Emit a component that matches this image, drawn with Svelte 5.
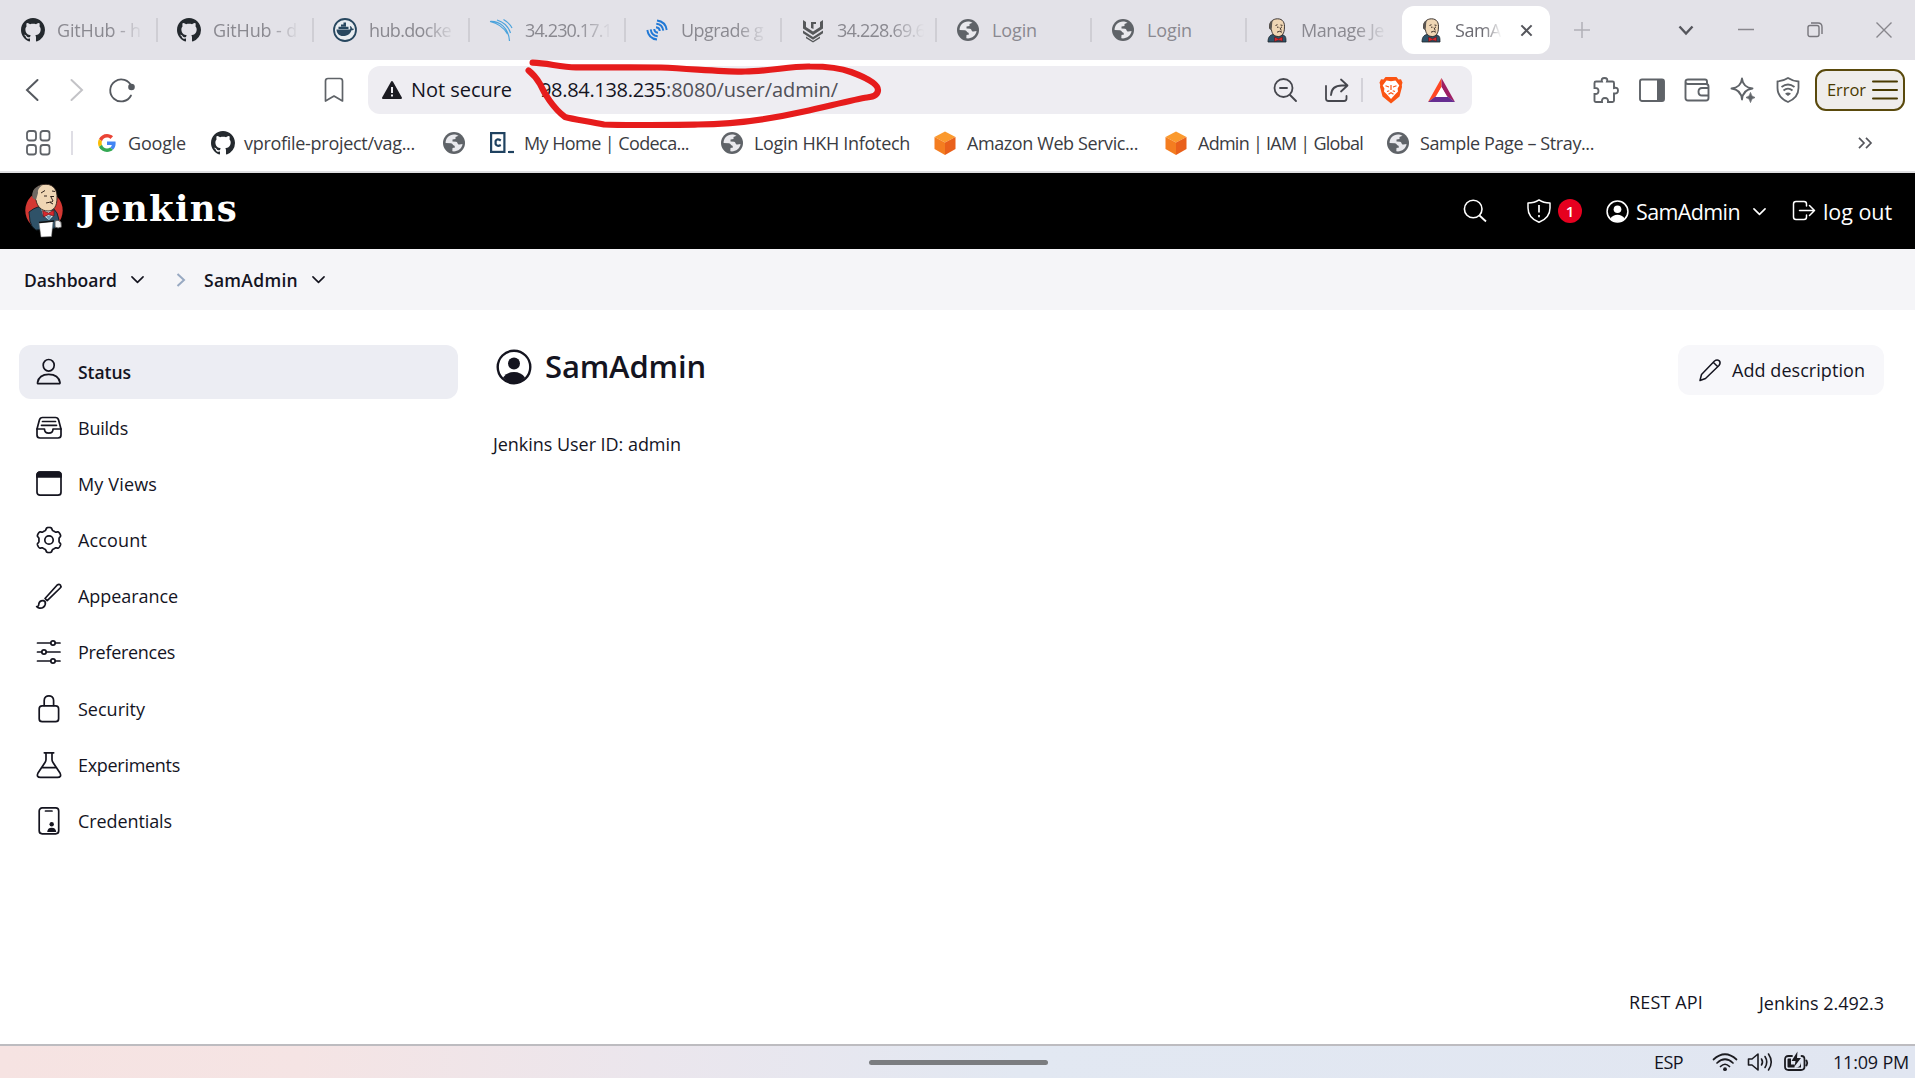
<script>
  // Tracks a label so that it occupies the given width.
  function fit(node, width) {
    const natural = node.getBoundingClientRect().width;
    node.style.letterSpacing = `${(width - 1 - natural) / node.textContent.length}px`;
  }

  // Six-lobed cog outline around (14, 14).
  function cog() {
    let d = '';
    for (let i = 0; i < 180; i++) {
      const a = (i / 180) * Math.PI * 2;
      const r = 11.3 + 1.25 * Math.tanh(-2.4 * Math.cos(6 * a));
      d += `${i ? 'L' : 'M'}${(14 + r * Math.cos(a)).toFixed(2)} ${(14 + r * Math.sin(a)).toFixed(2)}`;
    }
    return d + 'Z';
  }

  const butlerHead = `
    <path d="M3 24C3 19 5 17 8 16.500L18 17C21 18 21 20 21 24Z" fill="#2f5268" stroke="#1d2329" stroke-width=".8"/>
    <path d="M4.500 10C4 4 8 .8 12.500 .8C18 .8 20 5 19.400 10C19.500 15 17 18.500 13.500 18.500C9 18.500 7 15.500 6.500 12Z" fill="#efd6b4" stroke="#2b2522" stroke-width=".9"/>
    <path d="M4.500 11C3.600 6 5 3 8 2.200C6.500 5 7.500 8 6.500 12Z" fill="#5b5652"/>
    <path d="M10.500 7.500l2-.8M15.500 7l2 .4M12 9.200h1.500M16 9.200h1M15 9.500l1.200 3M12 14.200q2.500-1.800 5 0" fill="none" stroke="#3a2c25" stroke-width="1"/>
    <path d="M9.500 19l4 1.800 4-2v4.500l-4-1.300-4 1.600z" fill="#d8282d" stroke="#4a1617" stroke-width=".5"/>`;

  const github = '<path fill="#24292e" d="M8 0C3.580 0 0 3.580 0 8c0 3.540 2.290 6.530 5.470 7.590.4.070.55-.17.55-.38 0-.19-.01-.82-.01-1.490-2.010.37-2.530-.49-2.690-.94-.09-.23-.48-.94-.82-1.130-.28-.15-.68-.52-.01-.53.63-.01 1.080.58 1.230.82.72 1.210 1.870.87 2.330.66.070-.52.28-.87.51-1.070-1.780-.2-3.640-.89-3.640-3.950 0-.87.31-1.590.82-2.150-.08-.2-.36-1.020.08-2.120 0 0 .67-.21 2.200.82.64-.18 1.320-.27 2-.27s1.360.09 2 .27c1.530-1.040 2.200-.82 2.200-.82.44 1.100.16 1.920.08 2.120.51.56.82 1.270.82 2.150 0 3.070-1.870 3.750-3.650 3.950.29.25.54.73.54 1.480 0 1.070-.01 1.930-.01 2.200 0 .21.15.46.55.38A8.010 8.010 0 0 0 16 8c0-4.420-3.580-8-8-8z"/>';
  const globe = '<circle cx="12" cy="12" r="11" fill="#5f6368"/><path d="M12 3.500C7 3.500 3.500 7.500 3.600 12L9 12.200C11 12.500 10.500 14.500 12.500 14.700L13 16.500L10.500 17L10.300 20.300C15 21.200 20.300 17.500 20.500 13L17.500 13.500C15 13.500 16 11 14 10.700L10.500 10.500V8.500L13.500 8V6L16.500 4.700C15 3.800 13.500 3.500 12 3.500Z" fill="#e9e9ed"/>';
  const cube = '<path d="M12 .5l10.500 5.500L12 11.500 1.500 6z" fill="#fb9a2e"/><path d="M1.500 6L12 11.500V24L1.500 18z" fill="#f47d20"/><path d="M22.500 6L12 11.500V24l10.500-6z" fill="#e9601b"/>';

  const glyphs = {
    github: ['0 0 16 16', github],
    globe: ['0 0 24 24', globe],
    cube: ['0 0 24 24', cube],
    butler: ['0 0 24 24', butlerHead],
    docker: ['0 0 24 24', '<circle cx="12" cy="12" r="11" fill="#e8edf1" stroke="#27475f" stroke-width="1.800"/><path d="M3.500 11.500H17C17.500 10.500 17.300 9.500 16.800 8.800L17.600 8C18.700 8.800 19 9.800 19 10.500C20 10.300 20.800 10.600 21 11C20.600 12 19.500 12.400 18.500 12.300C17 16.500 14 18 10 18C6 18 3.800 15.500 3.500 11.500Z" fill="#27475f"/><path d="M5.500 8.800h10v2.200h-10zM8 6.500h5v2H8zM10.500 4.500H13v2h-2.500z" fill="#27475f"/>'],
    arcs: ['0 0 24 24', '<path d="M1 3.500C11 3 19.500 10 20.500 23M8 2C14.500 4 19.500 9 21.500 15M14.500 1.500C18 3.500 21 6 23 10M1 3.500C8 5 15 10 18.500 16" fill="none" stroke="#4ba3dc" stroke-width="1.200"/>'],
    signal: ['0 0 24 24', '<g fill="none" stroke="#2179d6" stroke-width="1.900"><path d="M11 9.200Q14.500 9.500 14.800 13M11.300 5.800Q17.500 6.500 18.300 12.700M12 2.500Q20.500 3.500 21.700 12"/><path d="M13 14.800Q9.500 14.500 9.200 11M12.700 18.200Q6.500 17.500 5.700 11.300M12 21.500Q3.500 20.500 2.300 12"/></g>'],
    chevrons: ['0 0 24 24', '<path d="M2 2l3 2v5l7 4.500L19 9V4l3-2v8.500L12 17 2 10.500zM10 4h5v2h-2.500v5l-2.500-1zM2 12.500L12 19l10-6.500v2.700L12 21.700 2 15.200zM5 18.500l7 4.500 7-4.500v1.700L12 24.500 5 20.200z" fill="#56585a"/>'],
    google: ['0 0 48 48', '<path fill="#ea4335" d="M24 9.500c3.540 0 6.710 1.220 9.210 3.600l6.850-6.850C35.900 2.380 30.470 0 24 0 14.620 0 6.510 5.380 2.560 13.220l7.980 6.190C12.430 13.720 17.740 9.500 24 9.500z"/><path fill="#4285f4" d="M46.980 24.550c0-1.570-.15-3.090-.38-4.550H24v9.020h12.940c-.58 2.960-2.260 5.480-4.780 7.180l7.730 6c4.510-4.180 7.090-10.360 7.090-17.650z"/><path fill="#fbbc05" d="M10.530 28.590A14.500 14.500 0 0 1 9.770 24c0-1.600.27-3.140.76-4.590l-7.980-6.190A23.900 23.900 0 0 0 0 24c0 3.880.92 7.540 2.560 10.780z"/><path fill="#34a853" d="M24 48c6.480 0 11.930-2.130 15.890-5.810l-7.730-6c-2.150 1.450-4.920 2.300-8.160 2.300-6.260 0-11.570-4.220-13.470-9.910l-7.980 6.190C6.510 42.620 14.620 48 24 48z"/>'],
    code: ['0 0 24 24', '<rect x="1.100" y="2.100" width="13.300" height="18.800" fill="#fff" stroke="#1f4260" stroke-width="2.200"/><path d="M10.800 9.500Q7 7 5.600 10v3Q7 16 10.800 14" fill="none" stroke="#1f4260" stroke-width="2.200"/><path d="M18 21h6" stroke="#1f4260" stroke-width="2.200"/>']
  };

  const tabs = [
    { icon: 'github', label: 'GitHub - h', w: 85, fade: true },
    { icon: 'github', label: 'GitHub - d', w: 85, fade: true },
    { icon: 'docker', label: 'hub.docke', w: 83, fade: true },
    { icon: 'arcs', label: '34.230.17.1', w: 88, fade: true },
    { icon: 'signal', label: 'Upgrade g', w: 83, fade: true },
    { icon: 'chevrons', label: '34.228.69.6', w: 89, fade: true },
    { icon: 'globe', label: 'Login', w: 46 },
    { icon: 'globe', label: 'Login', w: 46 },
    { icon: 'butler', label: 'Manage Je', w: 84, fade: true }
  ];

  const bookmarks = [
    { icon: 'google', label: 'Google', w: 59, small: true },
    { icon: 'github', label: 'vprofile-project/vag...', w: 172 },
    { icon: 'globe' },
    { icon: 'code', label: 'My Home | Codeca...', w: 166 },
    { icon: 'globe', label: 'Login HKH Infotech', w: 157 },
    { icon: 'cube', label: 'Amazon Web Servic...', w: 172 },
    { icon: 'cube', label: 'Admin | IAM | Global', w: 166 },
    { icon: 'globe', label: 'Sample Page – Stray...', w: 175 }
  ];

  const menu = [
    { label: 'Status', w: 54, active: true, art: '<ellipse cx="13.700" cy="7.300" rx="5.500" ry="5.800"/><path d="M2.500 24.500C3.500 19 8 16.300 13.700 16.300S24 19 25 24.500Q25.200 25.700 24 25.700H3.500Q2.200 25.700 2.500 24.500Z"/>' },
    { label: 'Builds', w: 51, art: '<path d="M2 15V21Q2 24 5 24H23Q26 24 26 21V15L23.600 6Q22.900 3.500 20.500 3.500H7.500Q5.100 3.500 4.400 6Z"/><path d="M2 15H9.500C9.500 20.500 18 20.500 18 15H26M7.500 7.500H20.500M6.500 11.300H21.500"/>' },
    { label: 'My Views', w: 80, art: '<rect x="2" y="2.200" width="24" height="23" rx="3"/><path d="M2 7V5Q2 2.200 5 2.200H23Q26 2.200 26 5V7Z" fill="#14141f"/>' },
    { label: 'Account', w: 70, art: `<path d="${cog()}"/><circle cx="14" cy="14" r="4.200"/>` },
    { label: 'Appearance', w: 101, art: '<path d="M10 16.500L22.200 3Q24 1.700 25.400 3Q26.600 4.400 25.200 6L12.200 18.700Z M8.500 18.600Q11 19.500 10.200 22.500Q9 26.500 4.500 26.200Q2.500 25.800 1.600 24.600Q3.700 24.800 3.800 22Q4.500 18.200 8.500 18.600Z"/>' },
    { label: 'Preferences', w: 98, art: '<path d="M2.500 5H15.700M20.200 5H25M2.500 14H6.700M11.200 14H25M2.500 23H15.700M20.200 23H25"/><circle cx="18" cy="5" r="2.200"/><circle cx="9" cy="14" r="2.200"/><circle cx="18" cy="23" r="2.200"/>' },
    { label: 'Security', w: 68, art: '<rect x="4.200" y="10.800" width="19.400" height="15.900" rx="3"/><path d="M9.200 10.500V5.500C9.200 -.8 18.600 -.8 18.600 5.500V10.500"/>' },
    { label: 'Experiments', w: 103, art: '<path d="M9.300 1.800H18.700M11 2V8.500Q11 10 10 11.500L3 22Q1 26.300 5.500 26.300H22.500Q27 26.300 25 22L18 11.500Q17 10 17 8.500V2M6.500 16.600H21.500"/>' },
    { label: 'Credentials', w: 95, art: '<rect x="4.200" y=".9" width="19.500" height="25.900" rx="3"/><path d="M10.500 4H17"/><circle cx="16.700" cy="17.200" r="2.200" fill="#14141f" stroke="none"/><path d="M12.200 25Q12.500 20.700 16.700 20.700T21.200 25Z" fill="#14141f" stroke="none"/>' }
  ];
</script>

{#snippet glyph(name)}
  <svg class="glyph" viewBox={glyphs[name][0]}>{@html glyphs[name][1]}</svg>
{/snippet}

{#snippet avatar(cls)}
  <svg class={cls} viewBox="0 0 36 36">
    <circle cx="18" cy="18" r="16.300" fill="none" stroke="currentColor" stroke-width="2.400" />
    <circle cx="18" cy="14.500" r="6" fill="currentColor" />
    <path d="M7 28.500Q11 23 18 23T29 28.500Q25 34 18 34T7 28.500Z" fill="currentColor" />
  </svg>
{/snippet}

{#snippet chevron(cls)}
  <svg class={cls} viewBox="0 0 14 14"><path d="M1.800 4.500L7 9.700l5.200-5.200" fill="none" stroke="currentColor" stroke-width="1.500" stroke-linecap="round" stroke-linejoin="round" /></svg>
{/snippet}

<div class="screen">
  <div class="tabstrip">
    {#each tabs as tab}
      <div class="tab">
        {@render glyph(tab.icon)}
        <div class="clip" class:fade={tab.fade}><span use:fit={tab.w}>{tab.label}</span></div>
      </div>
    {/each}
    <div class="tab current">
      {@render glyph('butler')}
      <div class="clip fade"><span use:fit={47}>SamA</span></div>
      <svg class="close" viewBox="0 0 14 14"><path d="M1.500 1.500l11 11M12.500 1.500l-11 11" stroke="#55565c" stroke-width="2.200" /></svg>
    </div>
    <svg class="newtab" viewBox="0 0 16 16"><path d="M8 0v16M0 8h16" stroke="#b1b0b6" stroke-width="1.500" /></svg>
    <div class="window">
      <svg class="w16" viewBox="0 0 16 16"><path d="M1.500 4.500L8 11.500l6.500-7" fill="none" stroke="#55565c" stroke-width="2.400" /></svg>
      <svg class="w16" viewBox="0 0 16 16"><path d="M0 7.500h16" stroke="#88878d" stroke-width="1.500" /></svg>
      <svg class="w16" viewBox="0 0 16 16"><rect x="1" y="3.500" width="11" height="11" rx="2" fill="none" stroke="#77767c" stroke-width="1.400" /><path d="M4 1h7q4 0 4 4v7" fill="none" stroke="#77767c" stroke-width="1.400" /></svg>
      <svg class="w16" viewBox="0 0 16 16"><path d="M.5 .5l15 15M15.500 .5l-15 15" stroke="#88878d" stroke-width="1.400" /></svg>
    </div>
  </div>

  <div class="toolbar">
    <div class="nav">
      <svg viewBox="0 0 26 26"><path d="M18.500 3L8 13l10.500 10" fill="none" stroke="#55595f" stroke-width="2" stroke-linecap="round" /></svg>
      <svg viewBox="0 0 26 26"><path d="M7.500 3L18 13 7.500 23" fill="none" stroke="#c3c3c7" stroke-width="2" stroke-linecap="round" /></svg>
      <svg viewBox="0 0 26 26"><path d="M22.500 9.500A11 11 0 1 0 22 18.500" fill="none" stroke="#55595f" stroke-width="1.800" stroke-linecap="round" /><circle cx="22.500" cy="10" r="3.300" fill="#55595f" /></svg>
    </div>
    <svg class="mark" viewBox="0 0 20 26"><path d="M1.500 4Q1.500 1.500 4 1.500H16Q18.500 1.500 18.500 4V24L10 19 1.500 24Z" fill="none" stroke="#5f6368" stroke-width="1.700" stroke-linejoin="round" /></svg>
    <div class="address">
      <svg class="warn" viewBox="0 0 20 18"><path d="M10 1L19 17H1Z" fill="#1b1b22" stroke="#1b1b22" stroke-width="2" stroke-linejoin="round" /><path d="M10 6v6M10 13.500v2" stroke="#eeedf2" stroke-width="2" /></svg>
      <div class="insecure"><span use:fit={102}>Not secure</span></div>
      <div class="url"><span use:fit={127}>98.84.138.235</span><span class="path" use:fit={173}>:8080/user/admin/</span></div>
      <svg class="i26" viewBox="0 0 26 26"><circle cx="11.500" cy="11" r="9" fill="none" stroke="#45464d" stroke-width="1.800" /><path d="M18 18l6 6M8 11h7" stroke="#45464d" stroke-width="1.900" stroke-linecap="round" /></svg>
      <svg class="i26 share" viewBox="0 0 26 26"><path d="M2 9V21.500Q2 24 4.500 24H20Q22.500 24 22.500 21.500V19M7 18Q7.500 8.500 18 8.500H22M17 2.500L23.500 8.500L17 14.500" fill="none" stroke="#45464d" stroke-width="1.800" stroke-linecap="round" stroke-linejoin="round" /></svg>
      <div class="rule"></div>
      <svg class="brave" viewBox="0 0 24 28"><path d="M6.500 1H17.500L19.500 3.500L22 3.300L23.500 6.500L22.800 9L23 11L20.500 20.500L12 27.500L3.500 20.500L1 11L1.200 9L.5 6.500L2 3.300L4.500 3.500Z" fill="#fb5413" /><path d="M12 5.200L16.500 4.500L20.300 9.500L18.600 12.500L19 15.500L16 18.500L12 23L8 18.500L5 15.500L5.400 12.500L3.700 9.500L7.500 4.500Z" fill="#fff" /><path d="M6.500 9.800l3.500 1.200M17.500 9.800l-3.500 1.200M12 9v5M8 15.500l2.300-.8M16 15.500l-2.300-.8M9.500 18.300l2.500-1.500 2.500 1.500" stroke="#fb5413" stroke-width="1.200" fill="none" /></svg>
      <svg class="prism" viewBox="0 0 27 24"><path d="M13.500 0L0 24L9 17.800L13.500 9Z" fill="#ff4724" /><path d="M13.500 0L27 24L18 17.800L13.500 9Z" fill="#9e1f63" /><path d="M0 24H27L19.500 18.500H7.500Z" fill="#662d91" /><path d="M13.500 9L7.500 19H19.500Z" fill="#fff" /></svg>
    </div>
    <div class="extras">
      <svg class="i26" viewBox="0 0 26 26"><path d="M3 4.500H9Q7.800 1 11.500 1T14 4.500H19.500Q21 4.500 21 6V11Q25 10 25 13.500T21 16.500V23.500Q21 25 19.500 25H15Q15.500 21 12 21T9 25H3Q1.500 25 1.500 23.500V17Q5.500 17.500 5.500 14T1.500 11V6Q1.500 4.500 3 4.500Z" fill="none" stroke="#5f6368" stroke-width="1.900" /></svg>
      <svg class="i26" viewBox="0 0 26 26"><rect x="1" y="2.500" width="24" height="21.500" rx="2" fill="none" stroke="#5f6368" stroke-width="1.900" /><path d="M18 2.500h6q1 0 1 1V23q0 1-1 1h-6z" fill="#5f6368" /></svg>
      <svg class="i26" viewBox="0 0 26 26"><path d="M23 7V4.500Q23 2.500 21 2.500H4Q1.500 2.500 1.500 4.700T4 7H22Q24.500 7 24.500 9.500V21Q24.500 23.500 22 23.500H4Q1.500 23.500 1.500 21V4.500M24.500 11H18Q14.500 11 14.500 14.700T18 18.500H24.500" fill="none" stroke="#5f6368" stroke-width="1.900" /></svg>
      <svg class="i26" viewBox="0 0 26 26"><path d="M12 1.500Q13 10.500 22.500 11.500Q13 12.500 12 22.500Q11 12.500 1.500 11.500Q11 10.500 12 1.500Z" fill="#fff" stroke="#5f6368" stroke-width="1.900" stroke-linejoin="round" /><path d="M20.500 15.500Q21 20 25 20.500Q21 21 20.500 25.500Q20 21 16 20.500Q20 20 20.500 15.500Z" fill="#5f6368" stroke="#5f6368" stroke-width=".8" /></svg>
      <svg class="i26" viewBox="0 0 26 26"><path d="M13 1Q17.500 4 23.500 4.500V11Q23.500 20.500 13 25Q2.500 20.500 2.500 11V4.500Q8.500 4 13 1ZM6.500 10Q13 5 19.500 10M8.500 13.500Q13 9.800 17.500 13.500" fill="none" stroke="#5f6368" stroke-width="1.800" /><path d="M10 16.800Q13 14 16 16.800L13 19Z" fill="#5f6368" /></svg>
    </div>
    <div class="error">
      <span use:fit={40}>Error</span>
      <svg viewBox="0 0 26 20"><path d="M1 1.500h24M1 10h24M1 18.500h24" stroke="#4a3a00" stroke-width="2" stroke-linecap="round" /></svg>
    </div>
  </div>

  <div class="bookmarks">
    <svg class="apps" viewBox="0 0 25 26"><g fill="none" stroke="#5f6368" stroke-width="1.800"><rect x="1" y="1" width="9" height="9.500" rx="2.500" /><rect x="14.500" y="1" width="9" height="9.500" rx="2.500" /><rect x="1" y="15" width="9" height="9.500" rx="2.500" /><rect x="14.500" y="15" width="9" height="9.500" rx="2.500" /></g></svg>
    <div class="rule"></div>
    <div class="marks">
      {#each bookmarks as b}
        <div class="bookmark" class:small={b.small}>
          {@render glyph(b.icon)}
          {#if b.label}<span use:fit={b.w}>{b.label}</span>{/if}
        </div>
      {/each}
    </div>
    <svg class="more" viewBox="0 0 14 12"><path d="M1 .8L6 6 1 11.200M8 .8L13 6l-5 5.200" fill="none" stroke="#55565c" stroke-width="1.700" /></svg>
  </div>

  <header>
    <svg class="logo" viewBox="0 0 40 56">
      <ellipse cx="20" cy="27.500" rx="18.700" ry="19.500" fill="#d33833" />
      <path d="M5 29Q10 25 14 24L29 25Q34 29 35 37L31 45L12 47Q7 44 6 38Z" fill="#2f5268" stroke="#14232c" stroke-width="1" />
      <path d="M17 25L27 27L30 32L25 37L19 32Z" fill="#e9eef0" /><path d="M22 33l3 4 3-5z" fill="#6d9bb5" />
      <path d="M9 14C8 6 14 1.300 22 1.300C30 1.300 33.500 8 33 15C33 23 30 28 24 28C17 28 13 23 12 17Z" fill="#efd6b4" stroke="#30231c" stroke-width=".9" />
      <path d="M8.500 15Q7 7 13 4Q16 2 18 2.500Q13 6 14 10L12 17Z" fill="#6e6862" />
      <path d="M17 10l4-2.500M28 8l3 .5M20 13h3M27 13.500h3M26.500 13l2.500 5q-1 1.500-3 1M22 20q4-2 7 1" fill="none" stroke="#30231c" stroke-width="1" />
      <path d="M18.500 27.500L24.500 30L30 27V33L24.500 31.500L19.500 34Z" fill="#d8282d" stroke="#5b1718" stroke-width=".7" />
      <path d="M15 40L29 38.500L27.500 53.500L17 54Z" fill="#fff" stroke="#777" stroke-width=".5" /><path d="M15 39.500L30 38" stroke="#111" stroke-width="1.400" />
      <path d="M31 38Q34 36 37 39L37.500 44Q34 46 31 44Z" fill="#efefef" stroke="#555" stroke-width=".9" />
    </svg>
    <strong class="brand" use:fit={159}>Jenkins</strong>
    <div class="account">
      <svg class="search" viewBox="0 0 24 24"><circle cx="10.200" cy="10" r="8.800" fill="none" stroke="#fff" stroke-width="1.600" /><path d="M16.500 16.500L23 22.500" stroke="#fff" stroke-width="1.800" /></svg>
      <svg class="shield" viewBox="0 0 24 24"><path d="M12 .9Q16.500 4 23 4V9Q23 19 12 23.300Q1 19 1 9V4Q7.500 4 12 .9Z" fill="none" stroke="#fff" stroke-width="1.500" stroke-linejoin="round" /><path d="M12 6v7.500M12 16v2.200" stroke="#fff" stroke-width="1.700" /></svg>
      <b class="badge">1</b>
      {@render avatar('user')}
      <span class="name" use:fit={105}>SamAdmin</span>
      {@render chevron('down')}
      <svg class="exit" viewBox="0 0 24 22"><path d="M14.500 6V4Q14.500 1.500 12 1.500H4Q1.500 1.500 1.500 4V17Q1.500 19.500 4 19.500H12Q14.500 19.500 14.500 17V15M7.500 10.500H22.500M17.500 5.500L22.500 10.500L17.500 15.500" fill="none" stroke="#fff" stroke-width="1.500" stroke-linecap="round" stroke-linejoin="round" /></svg>
      <span class="logout" use:fit={70}>log out</span>
    </div>
  </header>

  <nav class="crumbs">
    <span use:fit={94}>Dashboard</span>
    {@render chevron('down')}
    <svg class="next" viewBox="0 0 10 14"><path d="M1.500 1L8 7l-6.500 6" fill="none" stroke="#98a9c2" stroke-width="2" /></svg>
    <span use:fit={95}>SamAdmin</span>
    {@render chevron('down')}
  </nav>

  <div class="body">
    <aside>
      {#each menu as item}
        <div class="item" class:active={item.active}>
          <svg viewBox="0 0 28 28"><g fill="none" stroke="#14141f" stroke-width="1.700" stroke-linecap="round" stroke-linejoin="round">{@html item.art}</g></svg>
          <span use:fit={item.w}>{item.label}</span>
        </div>
      {/each}
    </aside>
    <main>
      <div class="heading">
        {@render avatar('face')}
        <h1><span use:fit={162}>SamAdmin</span></h1>
        <div class="describe">
          <svg viewBox="0 0 24 24"><path d="M2 22.500L3.500 16.500L16.500 3Q19 1 21.300 2.800Q23 5 21 7.500L7.500 20.500ZM15.500 4.500L19.500 8.500" fill="none" stroke="#14141f" stroke-width="1.500" stroke-linejoin="round" /></svg>
          <span use:fit={134}>Add description</span>
        </div>
      </div>
      <p><span use:fit={189}>Jenkins User ID: admin</span></p>
    </main>
  </div>

  <footer>
    <span use:fit={75}>REST API</span>
    <span class="version" use:fit={126}>Jenkins 2.492.3</span>
  </footer>

  <div class="taskbar">
    <div class="side"></div>
    <div class="handle"></div>
    <div class="tray">
      <span use:fit={30}>ESP</span>
      <svg class="wifi" viewBox="0 0 26 20"><path d="M1.500 7.500Q13-3 24.500 7.500M5 11Q13 3.500 21 11M8.500 14.500Q13 10 17.500 14.500" fill="none" stroke="#1b1b20" stroke-width="1.700" stroke-linecap="round" /><circle cx="13" cy="17.200" r="1.900" fill="#1b1b20" /></svg>
      <svg class="sound" viewBox="0 0 26 20"><path d="M1.500 7V13H5L11 18V2L5 7ZM14.500 7Q16.500 10 14.500 13M18 4.500Q21.500 10 18 15.500M21.500 2Q27 10 21.500 18" fill="none" stroke="#1b1b20" stroke-width="1.600" stroke-linecap="round" stroke-linejoin="round" /></svg>
      <svg class="battery" viewBox="0 0 26 20"><path d="M9 3.500H5.500Q2 3.500 2 7V14Q2 17.500 5.500 17.500H18Q21.500 17.500 21.500 14V7Q21.500 3.500 18.500 3.500M23.500 8Q25 10.500 23.500 13" fill="none" stroke="#1b1b20" stroke-width="1.800" stroke-linecap="round" /><path d="M4.500 7Q4.500 6 5.500 6H8V12H12L11.500 15H5.500Q4.500 15 4.500 14ZM14.500-1L8.500 8.500H12.500L11.500 14L18 5.500H14Z" fill="#1b1b20" /><path d="M12 15Q18 15 18 9.500V15Z" fill="#1b1b20" /></svg>
      <span class="clock" use:fit={77}>11:09 PM</span>
    </div>
  </div>

  <svg class="scribble" viewBox="0 0 370 76"><path d="M12.600 9.700C28 10 40 14.300 56 14.300C90 14.500 115 14 141 14.500C175 16 205 19 225 18.500C250 18.500 270 13 290 13.500C305 13.500 318 14 331 19C350 26 358 32 358 37C358 43 352 44 347 44.500C336 46 305 54 284 58.500C255 65 215 71.500 178 71.500C140 72 105 72.500 84 71.500C66 68 52 66 45 64C33 55 24 40 20 31C16 24 13 21 8.600 17.500" /></svg>
</div>

<style>
  :global(body) { background: #fff; overflow: hidden; }
  .screen {
    position: relative;
    width: 1915px;
    height: 1078px;
    display: flex;
    flex-direction: column;
    overflow: hidden;
    background: #fff;
    color: #14141f;
    font: 18px/24px 'Open Sans', 'Noto Sans', sans-serif;
    white-space: nowrap;
  }
  .screen * { box-sizing: border-box; }
  svg { display: block; flex: none; overflow: visible; }
  span, strong { display: inline-block; flex: none; }
  .glyph { width: 24px; height: 24px; }
  .i26 { width: 26px; height: 26px; }
  .rule { width: 2px; height: 24px; background: #d3d2d9; flex: none; }

  .tabstrip { height: 60px; flex: none; display: flex; align-items: center; background: #e3e2e8; }
  .tab { width: 155px; height: 24px; flex: none; display: flex; align-items: center; gap: 12px; padding-left: 19px; border-right: 2px solid #cfced4; color: #8a8990; }
  .tab:nth-child(1) { width: 158px; padding-left: 21px; }
  .tab:nth-child(n + 2):nth-child(-n + 5) { width: 156px; }
  .tab:nth-child(9) { border-right: 0; padding-left: 18px; }
  .clip { width: 90px; overflow: hidden; }
  .fade { mask-image: linear-gradient(90deg, #000 60%, transparent 97%); }
  .tab.current { width: 148px; height: 48px; padding-left: 17px; border: 0; border-radius: 12px; background: #fff; color: #6d6c73; }
  .current .clip { width: 48px; }
  .close { width: 13px; height: 13px; margin-left: 5px; }
  .newtab { width: 16px; height: 16px; margin-left: 24px; }
  .window { display: grid; grid-template-columns: 60px 69px 69px 16px; padding-left: 88px; }
  .w16 { width: 16px; height: 16px; }

  .toolbar { height: 60px; flex: none; display: flex; align-items: center; }
  .nav { display: flex; gap: 19px; padding-left: 19px; }
  .nav svg { width: 26px; height: 26px; }
  .mark { width: 20px; height: 26px; margin-left: 189px; }
  .address { width: 1104px; height: 48px; margin-left: 24px; padding-left: 14px; display: flex; align-items: center; background: #eeedf2; border-radius: 12px; font-size: 20px; }
  .warn { width: 20px; height: 18px; }
  .insecure { width: 129px; margin-left: 9px; flex: none; }
  .url { width: 732px; flex: none; display: flex; }
  .path { color: #505058; }
  .share { margin-left: 26px; }
  .address .rule { margin-left: 11px; }
  .brave { width: 24px; height: 28px; margin-left: 16px; }
  .prism { width: 27px; height: 24px; margin-left: 25px; }
  .extras { display: flex; gap: 19.500px; margin-left: 121px; }
  .error { width: 90px; height: 42px; margin-left: 14px; padding-left: 10px; display: flex; align-items: center; gap: 6px; border: 2px solid #5a4a0c; border-radius: 11px; background: #efedeb; color: #4a3a00; font-size: 16.500px; }
  .error svg { width: 26px; height: 20px; }

  .bookmarks { height: 53px; flex: none; display: flex; align-items: center; padding: 0 43px 6px 26px; border-bottom: 2px solid #e0e0e2; color: #3b3c42; }
  .apps { width: 25px; height: 26px; }
  .bookmarks .rule { margin-left: 20px; background: #dfdee5; }
  .marks { display: grid; grid-template-columns: 116px 231px 48px 230px 213px 231px 222px 1fr; flex: 1; margin-left: 22px; }
  .bookmark { display: flex; align-items: center; gap: 10px; height: 24px; }
  .bookmark:nth-child(2) { gap: 9px; }
  .small .glyph { width: 18px; height: 18px; margin: 0 3px; }
  .small { gap: 9px; }
  .more { width: 14px; height: 12px; }

  header { height: 76px; flex: none; display: flex; align-items: center; background: #000; color: #fff; }
  .logo { width: 40px; height: 56px; margin-left: 24px; }
  .brand { margin: 0 0 4px 16px; font: bold 35.500px/44px 'DejaVu Serif', serif; }
  .account { display: flex; align-items: center; flex: none; width: 452px; margin-left: auto; font-size: 21.500px; }
  .search { width: 24px; height: 24px; }
  .shield { width: 24px; height: 24px; margin-left: 40px; }
  .badge { width: 24px; height: 24px; margin-left: 7px; border-radius: 50%; background: #e6001f; text-align: center; font: 600 15px/24px 'Open Sans', sans-serif; }
  .user { width: 23px; height: 23px; margin-left: 24px; }
  .name { margin: 2px 0 0 7px; }
  .down { width: 15px; height: 15px; }
  .account .down { margin-left: 12px; }
  .exit { width: 24px; height: 22px; margin-left: 25px; }
  .logout { margin: 2px 0 0 7px; }

  .crumbs { height: 61px; flex: none; display: flex; align-items: center; padding-left: 24px; background: #f5f5f8; font-size: 17.500px; font-weight: 600; }
  .crumbs .down { margin-left: 13px; }
  .next { width: 10px; height: 14px; margin: 0 18px 0 31px; }

  .body { display: flex; flex: 1; padding: 35px 31px 0 19px; }
  aside { width: 439px; display: flex; flex-direction: column; gap: 2.100px; }
  .item { height: 54px; flex: none; display: flex; align-items: center; gap: 15px; padding-left: 16px; border-radius: 12px; }
  .item svg { width: 28px; height: 28px; }
  .active { background: #ecedf3; font-size: 17.500px; font-weight: 600; }
  main { flex: 1; padding-left: 35px; }
  .heading { display: flex; }
  .face { width: 36px; height: 36px; margin: 4px 0 0 3px; }
  h1 { margin: 0 0 0 13px; font: 600 31px/42px 'Open Sans', sans-serif; }
  .describe { width: 206px; height: 50px; margin-left: auto; padding-left: 20px; display: flex; align-items: center; gap: 10px; border-radius: 12px; background: #f7f7fa; }
  .describe svg { width: 24px; height: 24px; }
  p { margin: 37px 0 0; }

  footer { height: 54px; flex: none; display: flex; justify-content: flex-end; gap: 56px; padding-right: 31px; }
  .version { margin-top: 1px; }
  .taskbar { height: 34px; flex: none; display: grid; grid-template-columns: 869px 179px 1fr; align-items: center; border-top: 2px solid #bdbcc0; background: linear-gradient(90deg, #f6e3e2 0, #f5e4e4 300px, #ebe6ed 650px, #e2e8f2 1020px, #e1e6f1 100%); }
  .handle { height: 5px; border-radius: 3px; background: #7b7d80; }
  .tray { display: flex; align-items: center; padding-left: 606px; }
  .wifi { width: 26px; height: 20px; margin-left: 29px; }
  .sound { width: 26px; height: 20px; margin-left: 9px; }
  .battery { width: 26px; height: 21px; margin-left: 10px; }
  .clock { margin-left: 24px; }

  .scribble { position: absolute; left: 520px; top: 53px; width: 370px; height: 76px; }
  .scribble path { fill: none; stroke: #e61c1c; stroke-width: 6.200; stroke-linecap: round; stroke-linejoin: round; }
</style>
